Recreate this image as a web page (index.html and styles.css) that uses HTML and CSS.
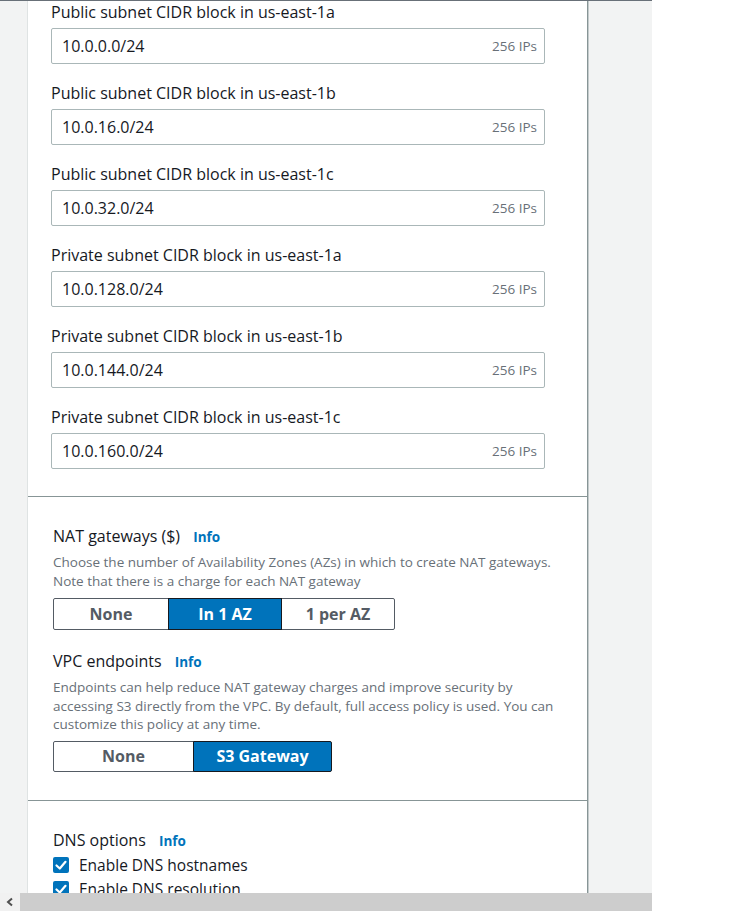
FILE: index.html
```html
<!DOCTYPE html>
<html>
<head>
<meta charset="utf-8">
<link rel="stylesheet" href="styles.css">
</head>
<body>
<div class="page">
  <div class="viewport">
    <div class="panel">
      <div class="section fields">
        <div class="field">
          <div class="label">Public subnet CIDR block in us-east-1a</div>
          <div class="input"><span class="val">10.0.0.0/24</span><span class="hint">256 IPs</span></div>
        </div>
        <div class="field">
          <div class="label">Public subnet CIDR block in us-east-1b</div>
          <div class="input"><span class="val">10.0.16.0/24</span><span class="hint">256 IPs</span></div>
        </div>
        <div class="field">
          <div class="label">Public subnet CIDR block in us-east-1c</div>
          <div class="input"><span class="val">10.0.32.0/24</span><span class="hint">256 IPs</span></div>
        </div>
        <div class="field">
          <div class="label">Private subnet CIDR block in us-east-1a</div>
          <div class="input"><span class="val">10.0.128.0/24</span><span class="hint">256 IPs</span></div>
        </div>
        <div class="field">
          <div class="label">Private subnet CIDR block in us-east-1b</div>
          <div class="input"><span class="val">10.0.144.0/24</span><span class="hint">256 IPs</span></div>
        </div>
        <div class="field">
          <div class="label">Private subnet CIDR block in us-east-1c</div>
          <div class="input"><span class="val">10.0.160.0/24</span><span class="hint">256 IPs</span></div>
        </div>
      </div>
      <div class="section options">
        <div class="heading">NAT gateways ($) <a class="info">Info</a></div>
        <div class="desc">Choose the number of Availability Zones (AZs) in which to create NAT gateways. Note that there is a charge for each NAT gateway</div>
        <div class="seg seg-nat">
          <div class="seg-btn w116">None</div>
          <div class="seg-btn w114 on">In 1 AZ</div>
          <div class="seg-btn w114">1 per AZ</div>
        </div>
        <div class="heading h-vpc">VPC endpoints <a class="info">Info</a></div>
        <div class="desc">Endpoints can help reduce NAT gateway charges and improve security by accessing S3 directly from the VPC. By default, full access policy is used. You can customize this policy at any time.</div>
        <div class="seg seg-vpc">
          <div class="seg-btn w141">None</div>
          <div class="seg-btn w139 on">S3 Gateway</div>
        </div>
      </div>
      <div class="section dns">
        <div class="heading h-dns">DNS options <a class="info">Info</a></div>
        <label class="check"><span class="box"><svg viewBox="0 0 16 16" width="16" height="16"><path d="M3.5 8.5 L6.8 11.5 L12.5 4.8" fill="none" stroke="#fff" stroke-width="2.2" stroke-linecap="round" stroke-linejoin="round"/></svg></span>Enable DNS hostnames</label>
        <label class="check"><span class="box"><svg viewBox="0 0 16 16" width="16" height="16"><path d="M3.5 8.5 L6.8 11.5 L12.5 4.8" fill="none" stroke="#fff" stroke-width="2.2" stroke-linecap="round" stroke-linejoin="round"/></svg></span>Enable DNS resolution</label>
      </div>
    </div>
  </div>
  <div class="hscroll">
    <div class="hs-btn"><svg width="10" height="10" viewBox="0 0 10 10"><path d="M7 1.5 L3 5 L7 8.5" fill="none" stroke="#505050" stroke-width="2"/></svg></div>
    <div class="hs-thumb"></div>
  </div>
</div>
</body>
</html>
```

FILE: styles.css
```css
* { box-sizing: border-box; }
html, body { margin: 0; padding: 0; }
body {
  width: 756px;
  height: 911px;
  overflow: hidden;
  background: #fff;
  font-family: "Open Sans", "Noto Sans", Arial, sans-serif;
  color: #16191f;
}
.page { width: 652px; height: 911px; display: flex; flex-direction: column; }
.viewport {
  height: 893px;
  background: #f2f3f3;
  border-top: 1px solid #687078;
  overflow: hidden;
  padding-left: 28px;
  padding-right: 65px;
}
.panel {
  background: #fff;
  width: 559px;
  min-height: 1000px;
  box-shadow: 1px 0 0 #879596, 2px 0 0 #c4cbcc, -1px 0 0 #dfe3e3;
}
.section { border-bottom: 1px solid #879596; }
.fields { padding: 0 42px 27px 23px; }
.field { margin-bottom: 18px; }
.field:last-child { margin-bottom: 0; }
.label { font-size: 16px; line-height: 22px; margin-bottom: 5px; }
.input {
  height: 36px;
  border: 1px solid #aab7b8;
  border-radius: 2px;
  display: flex;
  align-items: center;
  justify-content: space-between;
  padding: 0 7px 0 10px;
}
.val { font-size: 16px; }
.hint { font-size: 13.5px; color: #687078; }
.options { padding: 28px 20px 28px 25px; }
.heading { font-size: 16px; line-height: 22px; }
.info { color: #0073bb; font-weight: 700; font-size: 13.5px; margin-left: 9px; }
.desc { font-size: 13.5px; line-height: 18.5px; color: #687078; margin-top: 5px; }
.seg {
  display: flex;
  margin-top: 8px;
  height: 32px;
}
.seg-vpc { margin-top: 7px; height: 31px; }
.seg-btn {
  display: flex; align-items: center; justify-content: center;
  font-size: 16px; font-weight: 700; color: #545b64;
  border: 1px solid #545b64;
  margin-left: -1px;
  background: #fff;
}
.seg-btn:first-child { margin-left: 0; border-radius: 2px 0 0 2px; }
.seg-btn:last-child { border-radius: 0 2px 2px 0; }
.seg-btn.on { background: #0073bb; color: #fff; border-color: #16191f; position: relative; }
.w116 { width: 116px; }
.w114 { width: 114px; }
.w141 { width: 141px; }
.w139 { width: 139px; }
.h-vpc { margin-top: 20px; }
.dns { padding: 28px 20px 0 25px; border-bottom: none; }
.h-dns { margin-bottom: 1px; }
.check { display: flex; align-items: center; gap: 10px; font-size: 15.5px; line-height: 24px; }
.box { width: 16px; height: 16px; background: #0073bb; border-radius: 2px; display: flex; }
.hscroll { height: 18px; display: flex; background: #cdcdcd; }
.hs-btn { width: 20px; background: #f1f1f1; display: flex; align-items: center; justify-content: center; }
.hs-thumb { flex: 1; }
```
